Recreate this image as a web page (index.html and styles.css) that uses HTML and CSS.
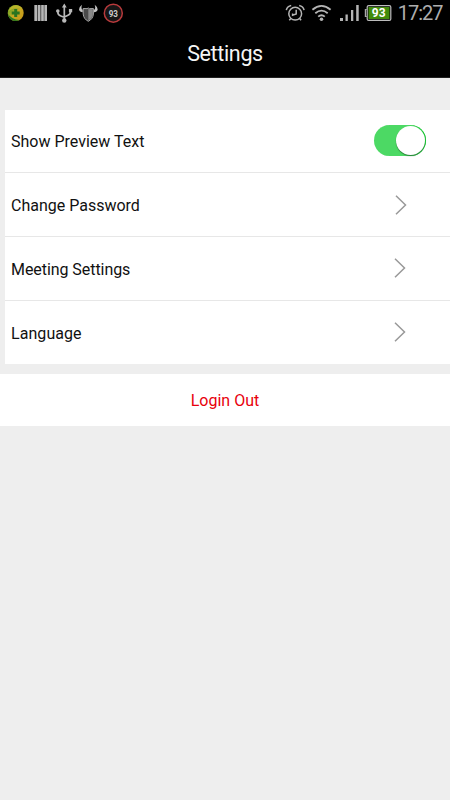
FILE: index.html
```html
<!DOCTYPE html>
<html lang="en">
<head>
<meta charset="utf-8">
<title>Settings</title>
<link rel="stylesheet" href="styles.css">
</head>
<body>
<header class="top">
  <div class="status">
    <svg class="status-left" width="130" height="27" viewBox="0 0 130 27" aria-hidden="true">
      <defs><linearGradient id="orb" x1="0" y1="0" x2="1" y2="1"><stop offset="0" stop-color="#5c9a27"/><stop offset=".3" stop-color="#8fa826"/><stop offset=".5" stop-color="#c9a822"/><stop offset="1" stop-color="#c49314"/></linearGradient></defs>
      <circle cx="15.7" cy="13" r="8" fill="url(#orb)"/>
      <path d="M8 14Q9 20.5 15 21Q18 21 19.5 20Q12 19.5 8 14Z" fill="#2f7b20"/>
      <path d="M8.5 11Q10.5 5 17 5.3Q21 6 22.7 9Q16 6 8.5 11Z" fill="#b9b52b"/>
      <path d="M15.7 8.9v8M11.7 12.9h8" stroke="#2a7520" stroke-width="3"/>
      <path d="M35.7 5v16M39.1 5v16M42.5 5v16M45.7 5v16" stroke="#bdbdbd" stroke-width="2.6"/>
      <path d="M34.5 13h12.4" stroke="#a9a9a9" stroke-width="15.5" opacity=".3"/>
      <g fill="none" stroke="#b9b9b9" stroke-width="1.7"><path d="M64.3 6v14M57.8 10.5v1.5q0 3 3 4l3.5 1.3M70.5 10v1.5q0 3-3 4L64.3 17"/></g>
      <g fill="#b9b9b9"><path d="M64.3 3.5l2.4 4h-4.8z"/><circle cx="57.8" cy="11" r="1.8"/><path d="M68.9 9h3.3v3.3h-3.3z"/><circle cx="64.3" cy="20.5" r="2.2"/></g>
      <path d="M83.2 8.5Q88.3 9 88.3 8Q88.3 9 93.4 8.5V14Q93 19 88.3 21.3Q83.6 19 83.2 14Z" fill="#4b4b4b" stroke="#a5a5a5" stroke-width="1"/>
      <path d="M88.3 9v11.5Q92.5 18 92.8 14V9.2Z" fill="#898989"/>
      <path d="M82 4.8Q79 7 79 9.5Q79.7 12.3 82.7 12.3V9.8Q80.6 9 82 4.8M94.7 4.8Q97.7 7 97.7 9.5Q97 12.3 94 12.3V9.8Q96.1 9 94.7 4.8" fill="#c3c3c3"/>
      <circle cx="113.3" cy="13.2" r="9" fill="#161616" stroke="#b83a3c" stroke-width="1.5"/>
      <text class="badge-num" x="113.3" y="16.8" textLength="9.3" lengthAdjust="spacingAndGlyphs">93</text>
    </svg>
    <svg class="status-right" width="170" height="27" viewBox="280 0 170 27" aria-hidden="true">
      <g fill="none" stroke="#b5b5b5" stroke-width="1.5">
        <circle cx="295.2" cy="13.7" r="6.4"/>
        <path d="M296.2 9.8v4.2l-3.6 1.2v-1.8M286.3 10.2Q287.2 6.2 291.2 5.5M299.2 5.5Q303.2 6.2 304.1 10.2M290.8 18.5l-1.5 1.7M299.6 18.5l1.5 1.7"/>
        <path d="M312.4 9.8Q321.5 1.9 330.6 9.8M315.3 13.3Q321.5 7.9 327.7 13.3M318.2 16.6Q321.5 13.8 324.8 16.6" stroke-width="1.8"/>
      </g>
      <circle cx="321.5" cy="19.2" r="1.8" fill="#b5b5b5"/>
      <path d="M340 18h3v2.9h-3zM345.5 14.5h2.3v6.4h-2.3zM351 10h2.3v10.9H351zM356.2 5h2.5v15.9h-2.5z" fill="#b5b5b5"/>
      <path d="M366.7 9.5h-1.3v7h1.3" fill="none" stroke="#aaa" stroke-width="1.2"/>
      <rect x="367.2" y="5.6" width="23.6" height="14.8" rx="1.5" fill="#000" stroke="#bdbdbd" stroke-width="1.2"/>
      <rect x="368.5" y="7" width="21" height="12" fill="#418b0b"/>
      <text class="battery-num" x="378.7" y="17.2" textLength="13.8" lengthAdjust="spacingAndGlyphs">93</text>
      <text class="clock" x="397.8" y="20" textLength="45.8">17:27</text>
    </svg>
  </div>
  <h1 class="title">Settings</h1>
</header>
<main>
  <ul class="list">
    <li class="row"><span>Show Preview Text</span><span class="switch"><span class="knob"></span></span></li>
    <li class="row"><span class="label">Change Password</span><svg class="chevron first" viewBox="0 0 12 20"><path d="M1 .8L10.5 10L1 19.2"/></svg></li>
    <li class="row"><span class="label meeting">Meeting Settings</span><svg class="chevron" viewBox="0 0 12 20"><path d="M1 .8L10.5 10L1 19.2"/></svg></li>
    <li class="row"><span class="label language">Language</span><svg class="chevron" viewBox="0 0 12 20"><path d="M1 .8L10.5 10L1 19.2"/></svg></li>
  </ul>
  <button class="logout">Login Out</button>
</main>
</body>
</html>
```
FILE: styles.css
```css
* { box-sizing: border-box; }
body { margin: 0; min-height: 800px; background: #eee; color: #111; font-family: Roboto, "Noto Sans", sans-serif; }
.top { height: 78px; background: #000; border-bottom: 1px solid #202020; }
.status { height: 27px; display: flex; justify-content: space-between; }
.badge-num { font: bold 9px Roboto, sans-serif; fill: #ccc; text-anchor: middle; }
.battery-num { font: bold 12px Roboto, sans-serif; fill: #fff; text-anchor: middle; }
.clock { font: 400 20px Roboto, sans-serif; fill: #aeaeae; }
.title { margin: 0; height: 50px; line-height: 53px; text-align: center; color: #f5f5f5; font-size: 21.5px; font-weight: 400; letter-spacing: -.35px; }
.list { list-style: none; margin: 32px 0 0 5px; padding: 0; background: #fff; }
.row { height: 64px; padding: 0 25px 0 6px; display: flex; align-items: center; justify-content: space-between; border-bottom: 1px solid #e7e7e7; font-size: 16px; }
.row:first-child { height: 63px; }
.row:last-child { height: 63px; border: 0; }
.label { padding-top: 2px; }
.meeting { letter-spacing: -.06px; }
.language { letter-spacing: .06px; }
.switch { width: 52px; height: 31px; margin: 0 -1px 1px 0; padding: 1px; border-radius: 16px; background: #4cd964; box-shadow: inset -1px 0 0 #16c52f; display: flex; justify-content: flex-end; }
.knob { width: 29px; height: 29px; border-radius: 50%; background: #fff; box-shadow: 0 1px 1px #287f38; }
.chevron { width: 12px; height: 20px; margin: 0 19px 2px 0; fill: none; stroke: #999; stroke-width: 1.5; }
.chevron.first { margin: 0 18px 0 0; }
.logout { display: block; width: 100%; height: 52px; margin-top: 10px; padding: 0; border: 0; background: #fff; color: #e8000c; font: 16px Roboto, sans-serif; }
```
